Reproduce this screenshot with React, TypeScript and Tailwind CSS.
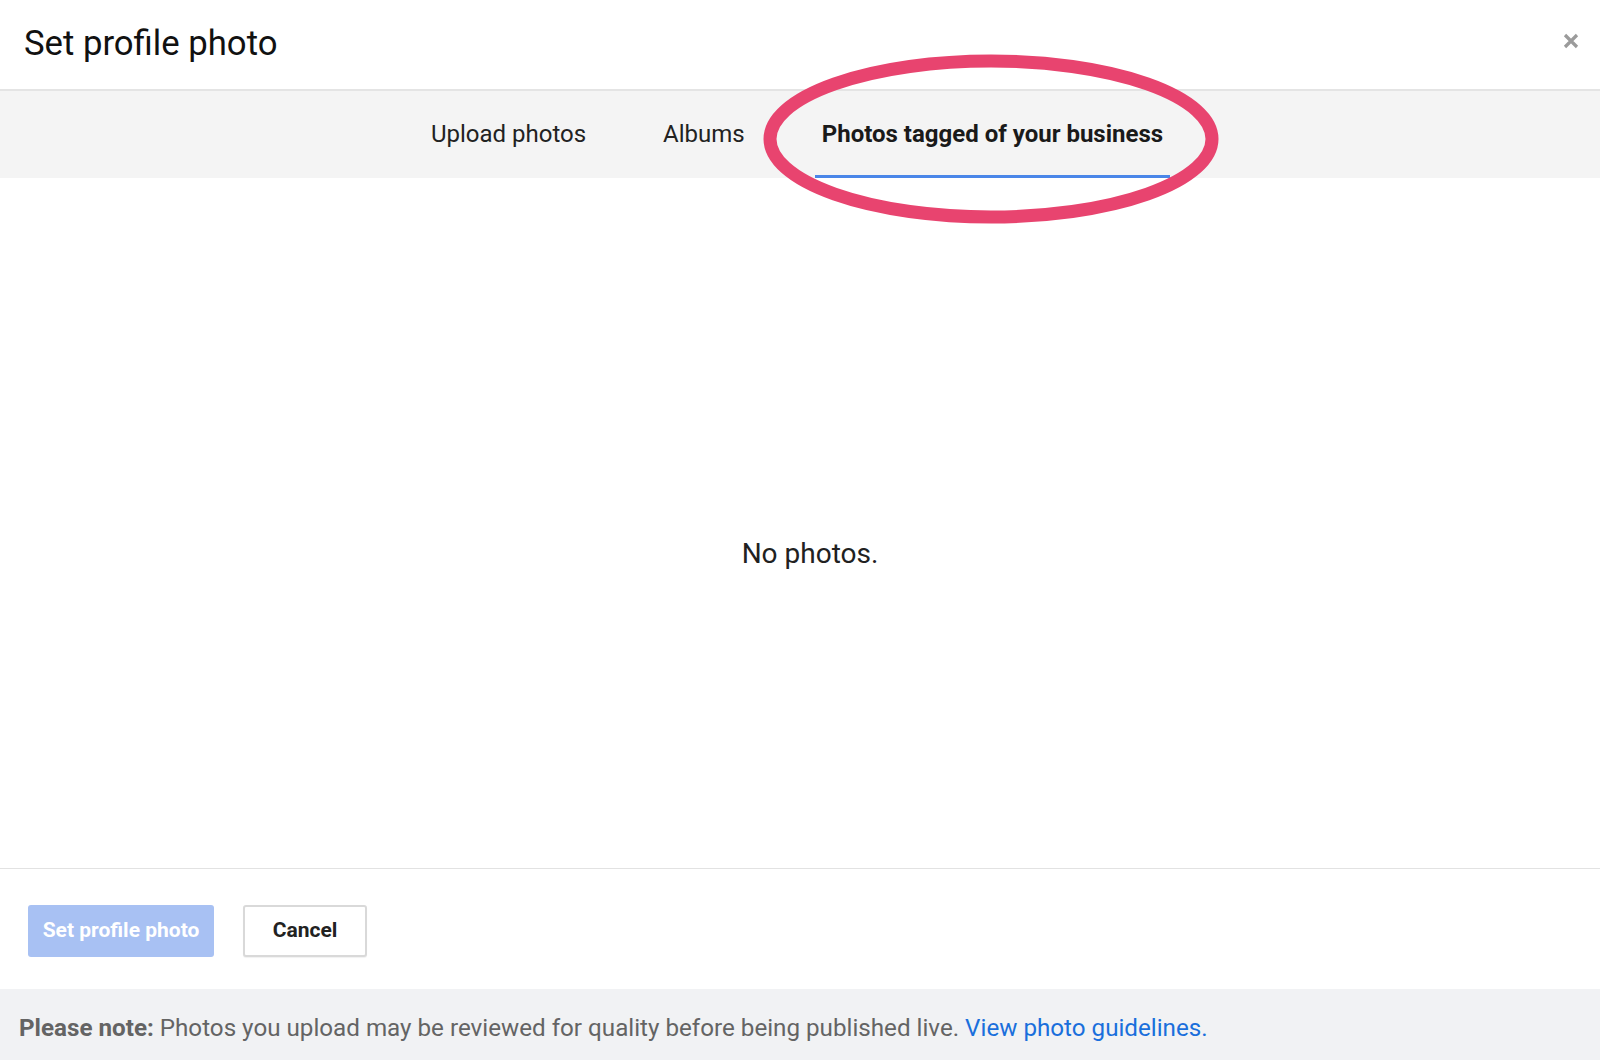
import React from 'react';

const tabs = [
    { label: 'Upload photos', active: false },
    { label: 'Albums', active: false },
    { label: 'Photos tagged of your business', active: true },
];

export default function App() {
    return (
        <div className="relative w-[1600px] h-[1060px] flex flex-col bg-white text-[#212121] font-['Roboto','Liberation_Sans',sans-serif] overflow-hidden">
            {/* header */}
            <div className="h-[91px] shrink-0 flex items-center justify-between pl-[24px] pr-[21px] border-b-2 border-[#e4e4e4]">
                <h1 className="text-[34.7px] leading-none pb-[2px] text-[#111]">Set profile photo</h1>
                <button className="size-[16px] flex items-center justify-center -mt-[8px]">
                    <svg viewBox="0 0 16 16" className="size-[16px]">
                        <path d="M2 2 L14 14 M14 2 L2 14" stroke="#9b9b9b" strokeWidth="3.2" strokeLinecap="butt" />
                    </svg>
                </button>
            </div>

            {/* tabs */}
            <div className="h-[87px] shrink-0 bg-[#f4f4f4] flex justify-center gap-[63px] pr-[6px]">
                {tabs.map((t) => (
                    <div
                        key={t.label}
                        className={`flex items-center px-[7px] pt-[1px] text-[24px] border-b-[3px] ${t.active ? 'border-[#4a86e8] font-bold text-[#1a1a1a]' : 'border-transparent text-[#222]'}`}
                    >
                        {t.label}
                    </div>
                ))}
            </div>

            {/* content */}
            <div className="flex-1 flex items-center justify-center pt-[62px] pl-[20px]">
                <p className="text-[28px] text-[#212121]">No photos.</p>
            </div>

            {/* actions */}
            <div className="h-[121px] shrink-0 border-t border-[#e2e2e2] flex items-center gap-[29px] pl-[28px] pt-[3px]">
                <button className="w-[186px] h-[52px] rounded-[3px] bg-[#a8c1f3] text-white text-[21px] font-bold">
                    Set profile photo
                </button>
                <button className="w-[124px] h-[52px] rounded-[3px] bg-white border-2 border-[#d9d9d9] text-[#222] text-[21px] font-bold shadow-[0_1px_1px_rgba(0,0,0,0.06)]">
                    Cancel
                </button>
            </div>

            {/* note */}
            <div className="h-[71px] shrink-0 bg-[#f1f2f4] flex items-center pl-[19px] pt-[8px] text-[24.2px] text-[#646464]">
                <p>
                    <span className="font-bold">Please note:</span> Photos you upload may be reviewed for quality before being published live.{' '}
                    <a className="text-[#1a6fdc]">View photo guidelines.</a>
                </p>
            </div>

            {/* annotation */}
            <svg className="absolute left-[762px] top-[53px] w-[458px] h-[173px] pointer-events-none" viewBox="0 0 458 173">
                <ellipse cx="229" cy="86" rx="221" ry="78" fill="none" stroke="#e8446f" strokeWidth="13" />
            </svg>
        </div>
    );
}
